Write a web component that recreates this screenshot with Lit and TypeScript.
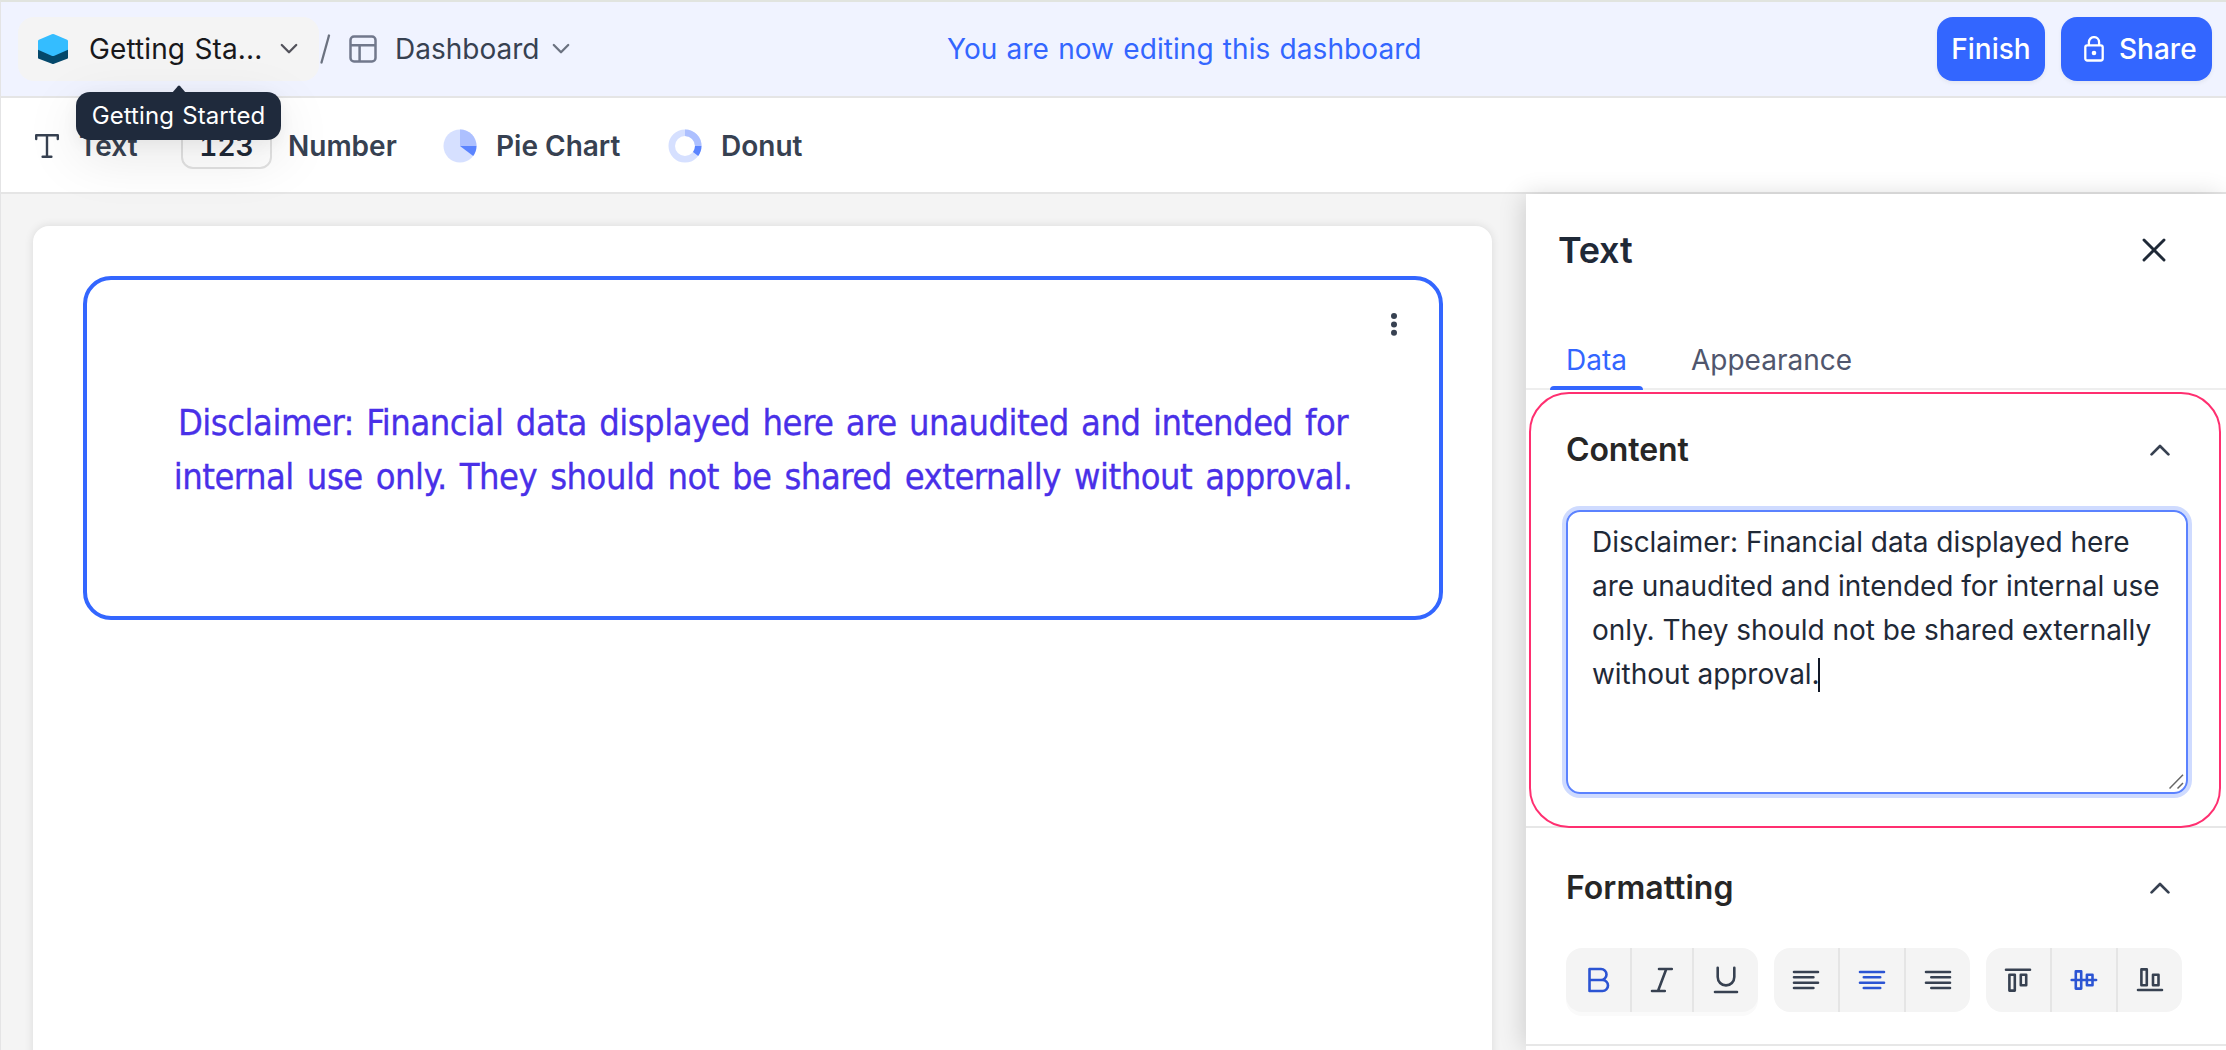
import { LitElement, html, css, svg } from "lit";
import { customElement, state } from "lit/decorators.js";
import { classMap } from "lit/directives/class-map.js";

const ACTIVE = "#2b54d3";
const INK = "#374151";

const chevronDown = html`<svg class="chev" width="18" height="12" viewBox="0 0 18 12" fill="none" stroke="currentColor" stroke-width="2.3" stroke-linecap="round" stroke-linejoin="round"><path d="M1.8 2 9 9.2 16.2 2" /></svg>`;
const chevronUp = html`<svg width="20" height="12" viewBox="0 0 20 12" fill="none" stroke="#374151" stroke-width="2.7" stroke-linecap="round" stroke-linejoin="round"><path d="M1.6 10.4 10 2l8.4 8.4" /></svg>`;

const formatIcons: Record<string, unknown> = {
  bold: svg`<path d="M7.5 5H19a5.5 5.5 0 0 1 0 11H7.5ZM7.5 16h13a5.5 5.5 0 0 1 0 11h-13Z"/>`,
  italic: svg`<path d="M13 5h12.8M6 27h12.8M20.3 5 12 27"/>`,
  underline: svg`<path d="M7.7 3.7v9.4a8.3 8.3 0 0 0 16.6 0V3.7M5 28h22"/>`,
  left: svg`<path d="M4 8h24M4 13.3h19.4M4 18.7h24M4 24h19.4"/>`,
  center: svg`<path d="M4 8h24M7.8 13.3h16.4M4 18.7h24M7.8 24h16.4"/>`,
  right: svg`<path d="M4 8h24M9.3 13.3H28M4 18.7h24M9.3 24H28"/>`,
  top: svg`<path d="M4 5.7h24M7.4 10.8h5.4v15.8H7.4ZM18.8 10.8h5.4v10.4h-5.4Z"/>`,
  middle: svg`<path d="M3.7 16h24.4M7.8 7.4h5.4v17.2H7.8ZM18.9 10.8h5.6v10.4h-5.6Z"/>`,
  bottom: svg`<path d="M4 26h24M7.4 5.4h5.4v15.8H7.4ZM19 10.8h5.5v10.4H19Z"/>`,
};

const formatGroups = [
  { kind: "style", items: ["bold", "italic", "underline"] },
  { kind: "halign", items: ["left", "center", "right"] },
  { kind: "valign", items: ["top", "middle", "bottom"] },
];

@customElement("app-root")
export class AppRoot extends LitElement {
  @state() private active = new Set(["bold", "center", "middle"]);
  @state() private tab = "Data";

  static styles = css`
    :host { display: block; width: 2226px; height: 1050px; overflow: hidden; font-family: Inter, "Liberation Sans", sans-serif; font-size: 28px; line-height: 44px; color: #374151; }
    * { box-sizing: border-box; }
    svg { display: block; flex: none; }
    .page { display: flex; flex-direction: column; height: 1050px; border-top: 2px solid #e1e4df; border-left: 1px solid #e4e4e5; background: #fff; white-space: nowrap; }
    .header { flex: none; height: 96px; display: flex; align-items: center; background: #f0f3ff; border-bottom: 2px solid #e5e5e5; padding: 0 14px 0 17px; }
    .pill { position: relative; width: 301px; height: 64px; border-radius: 16px; background: #f4f4f4; display: flex; align-items: center; padding-left: 20px; color: #18181b; }
    .pill .name { width: 172px; margin: 0 19px 0 21px; letter-spacing: 0.1px; word-spacing: 1.5px; }
    .pill .chev { color: #52525b; }
    .slash { margin: 0 18px 0 0; }
    .crumb { margin: 0 13px 0 18px; width: 144px; }
    .header > .chev { color: #6b7280; }
    .message { color: #3366ff; margin-left: 377px; letter-spacing: 0.06px; word-spacing: 1.3px; }
    .actions { margin-left: auto; display: flex; gap: 16px; }
    .btn { height: 64px; border-radius: 16px; background: #3366ff; color: #fff; font-weight: 500; display: flex; align-items: center; justify-content: center; box-shadow: 0 2px 4px rgba(0, 0, 0, 0.06); }
    .finish { width: 108px; }
    .share { width: 151px; gap: 15px; justify-content: flex-start; padding-left: 23px; }
    .tooltip { position: absolute; z-index: 5; left: 58px; top: 75px; width: 205px; height: 48px; border-radius: 14px; background: #1f2a3c; color: #fff; font-size: 24px; line-height: 48px; text-align: center; letter-spacing: 0.08px; word-spacing: 1.4px; box-shadow: 0 16px 56px rgba(0, 0, 0, 0.1), 0 4px 16px rgba(0, 0, 0, 0.05); }
    .arrow { position: absolute; left: 96px; top: -7px; }
    .toolbar { flex: none; height: 96px; display: flex; align-items: center; border-bottom: 2px solid #e5e5e5; padding: 2px 0 0 34px; font-weight: 600; }
    .tool { display: flex; align-items: center; }
    .t-text { gap: 20px; width: 146px; }
    .t-num { gap: 16px; width: 262px; }
    .t-pie { gap: 19px; width: 225px; }
    .t-donut { gap: 19px; }
    .numbox { width: 91px; height: 46px; border: 2px solid #e2e2e2; border-radius: 12px; background: #fff; color: #1f2937; text-align: center; line-height: 42px; font-variant-numeric: tabular-nums; }
    .body { flex: 1; min-height: 0; display: flex; background: #f4f4f4; }
    .canvas { flex: 1; padding: 32px 34px 0 32px; overflow: hidden; }
    .sheet { height: 900px; border-radius: 16px; background: #fff; padding: 50px 49px 0 50px; box-shadow: 0 0 10px rgba(0, 0, 0, 0.11); }
    .widget { position: relative; height: 344px; border: 4px solid #3366ff; border-radius: 28px; display: flex; align-items: center; justify-content: center; padding-top: 4px; text-align: center; font: 36px/54px "DejaVu Sans Condensed", "DejaVu Sans", sans-serif; font-stretch: condensed; letter-spacing: -0.5px; word-spacing: 3.2px; color: #4930e8; -webkit-text-stroke: 0.3px #4930e8; }
    .line-a { word-spacing: 2.6px; }
    .kebab { position: absolute; right: 41px; top: 32px; }
    .panel { position: relative; flex: none; width: 700px; background: #fff; box-shadow: -4px 0 24px -2px rgba(0, 0, 0, 0.16); }
    .title { height: 138px; padding: 0 59px 26px 32px; display: flex; align-items: center; justify-content: space-between; color: #1f2937; font-size: 36px; font-weight: 600; letter-spacing: -0.2px; }
    .tabs { display: flex; gap: 32px; height: 58px; padding-left: 24px; border-bottom: 2px solid #eeeeee; }
    .tab { height: 58px; line-height: 56px; padding: 0 16px; color: #50566d; }
    .tab.on { color: #3366ff; height: 56px; display: flex; flex-direction: column; }
    .tab.on::after { content: ""; height: 4px; margin: -2px -16px 0; flex: none; background: #3366ff; border-radius: 4px 4px 0 0; }
    .section { padding: 0 38px 32px 40px; border-bottom: 2px solid #e7e7e7; }
    .section h3 { margin: 0; height: 120px; display: flex; align-items: center; justify-content: space-between; padding-right: 18px; font-size: 32px; font-weight: 600; color: #262626; }
    .content h3 { letter-spacing: -0.1px; }
    .formatting h3 { letter-spacing: 0.05px; }
    .area { position: relative; height: 284px; border: 2px solid #5b82ff; border-radius: 14px; box-shadow: 0 0 0 4px #cfdbff; padding: 8px 24px 0 24px; color: #1f2937; letter-spacing: -0.04px; }
    .caret { display: inline-block; width: 2px; height: 34px; background: #111827; vertical-align: -8px; margin-left: -2px; }
    .grip { position: absolute; right: 2px; bottom: 2px; }
    .highlight { position: absolute; left: 3px; top: 198px; width: 692px; height: 436px; border: 2px solid #ff2f70; border-radius: 40px; pointer-events: none; }
    .groups { display: flex; gap: 16px; }
    .group { display: flex; border-radius: 16px; background: #f4f4f4; overflow: hidden; height: 64px; }
    .group.style { box-shadow: 0 4px 0 #fafafa; }
    .cell { width: 66px; display: flex; align-items: center; justify-content: center; border-left: 2px solid #e5e5e5; }
    .cell:first-child { width: 64px; border-left: 0; }
    .style .cell:nth-child(2) { width: 62px; }
  `;

  private toggle(name: string) {
    const next = new Set(this.active);
    next.has(name) ? next.delete(name) : next.add(name);
    this.active = next;
  }

  private header() {
    return html`<div class="header">
      <div class="pill">
        <svg width="30" height="30" viewBox="0 0 30 30">
          <path d="M0 14.5 15 19l15-4.5v9.2a1.2 1.2 0 0 1-.8 1.1L16 29.8a3 3 0 0 1-2 0L.8 24.8A1.2 1.2 0 0 1 0 23.7Z" fill="#04486b" />
          <path d="M0 7.2A1.5 1.5 0 0 1 .9 5.800L13.800.3a3 3 0 0 1 2.400 0l12.900 5.500a1.500 1.500 0 0 1 .9 1.400V15.700l-13.600 6a3.500 3.500 0 0 1-2.800 0L0 15.700Z" fill="#34bdff" />
        </svg>
        <span class="name">Getting Sta...</span>
        ${chevronDown}
        <div class="tooltip"><svg class="arrow" width="14" height="8" viewBox="0 0 14 8"><path d="M0 8 5.8 1.2a1.6 1.6 0 0 1 2.400 0L14 8Z" fill="#1f2a3c" /></svg>Getting Started</div>
      </div>
      <svg class="slash" width="12" height="32" viewBox="0 0 12 32"><path d="M2.5 29.5 10 2.5" stroke="#6b7280" stroke-width="2.3" stroke-linecap="round" /></svg>
      <svg width="28" height="28" viewBox="0 0 28 28" fill="none" stroke="#71788c" stroke-width="2.5"><rect x="1.5" y="1.5" width="25" height="25" rx="3.5" /><path d="M1.5 10.3h25M10.6 10.3v16.2" /></svg>
      <span class="crumb">Dashboard</span>
      ${chevronDown}
      <span class="message">You are now editing this dashboard</span>
      <div class="actions">
        <div class="btn finish">Finish</div>
        <div class="btn share">
          <svg width="20" height="26" viewBox="0 0 20 26" fill="none" stroke="#fff" stroke-width="2.3"><rect x="1.3" y="9.3" width="17.4" height="15.2" rx="2" /><path d="M4.9 9.3V6.2a5.1 5.1 0 0 1 10.2 0v3.1" /><circle cx="10" cy="17" r="2.3" fill="#fff" stroke="none" /></svg>
          Share
        </div>
      </div>
    </div>`;
  }

  private toolbar() {
    return html`<div class="toolbar">
      <div class="tool t-text">
        <svg width="24" height="24" viewBox="0 0 24 24" fill="none" stroke="#374151" stroke-width="2.4" stroke-linecap="round" stroke-linejoin="round"><path d="M1.2 5V1.2h21.6V5M12 1.2v21.6M7.6 22.8h8.800" /></svg>
        Text
      </div>
      <div class="tool t-num"><span class="numbox">123</span>Number</div>
      <div class="tool t-pie">
        <svg width="34" height="34" viewBox="-17 -17 34 34"><circle r="16.5" fill="#d6e0ff" /><path d="M0 0V-16.5A16.5 16.5 0 0 1 16.5 0Z" fill="#adc0ff" /><path d="M0 0H16.5A16.5 16.5 0 0 1 13.2 9.9Z" fill="#5b84ff" /></svg>
        Pie Chart
      </div>
      <div class="tool t-donut">
        <svg width="34" height="34" viewBox="-17 -17 34 34" fill="none" stroke-width="6.5"><circle r="13.25" stroke="#d6e0ff" /><path d="M0-13.25A13.25 13.25 0 0 1 13.25 0" stroke="#adc0ff" /><path d="M13.25 0A13.25 13.25 0 0 1 10.6 7.95" stroke="#5b84ff" /></svg>
        Donut
      </div>
    </div>`;
  }

  private panel() {
    return html`<div class="panel">
      <div class="title">Text
        <svg width="26" height="26" viewBox="0 0 26 26" stroke="#1f2937" stroke-width="2.9" stroke-linecap="round"><path d="M3 3l20 20M23 3 3 23" /></svg>
      </div>
      <div class="tabs">
        ${["Data", "Appearance"].map((t) => html`<div class=${classMap({ tab: true, on: this.tab === t })} @click=${() => (this.tab = t)}>${t}</div>`)}
      </div>
      <div class="section content">
        <h3>Content ${chevronUp}</h3>
        <div class="area">
          Disclaimer: Financial data displayed here<br />are unaudited and intended for internal use<br />only. They should not be shared externally<br />without approval.<span class="caret"></span>
          <svg class="grip" width="15" height="16" viewBox="0 0 15 16" stroke="#666" stroke-width="1.5"><path d="M.5 14.5 14 .8M8.5 14.500 14 9" /></svg>
        </div>
      </div>
      <div class="section formatting">
        <h3>Formatting ${chevronUp}</h3>
        <div class="groups">
          ${formatGroups.map((g) => html`<div class="group ${g.kind}">
            ${g.items.map((n) => html`<div class="cell" @click=${() => this.toggle(n)}>
              <svg width="32" height="32" viewBox="0 0 32 32" fill="none" stroke=${this.active.has(n) ? ACTIVE : INK} stroke-width="2.6" stroke-linecap="round" stroke-linejoin="round">${formatIcons[n]}</svg>
            </div>`)}
          </div>`)}
        </div>
      </div>
      <div class="highlight"></div>
    </div>`;
  }

  render() {
    return html`<div class="page">
      ${this.header()} ${this.toolbar()}
      <div class="body">
        <div class="canvas">
          <div class="sheet">
            <div class="widget">
              <div><span class="line-a">Disclaimer: Financial data displayed here are unaudited and intended for</span><br />internal use only. They should not be shared externally without approval.</div>
              <svg class="kebab" width="8" height="26" viewBox="0 0 8 26" fill="#374151"><circle cx="4" cy="4" r="3" /><circle cx="4" cy="12.4" r="3" /><circle cx="4" cy="20.7" r="3" /></svg>
            </div>
          </div>
        </div>
        ${this.panel()}
      </div>
    </div>`;
  }
}
